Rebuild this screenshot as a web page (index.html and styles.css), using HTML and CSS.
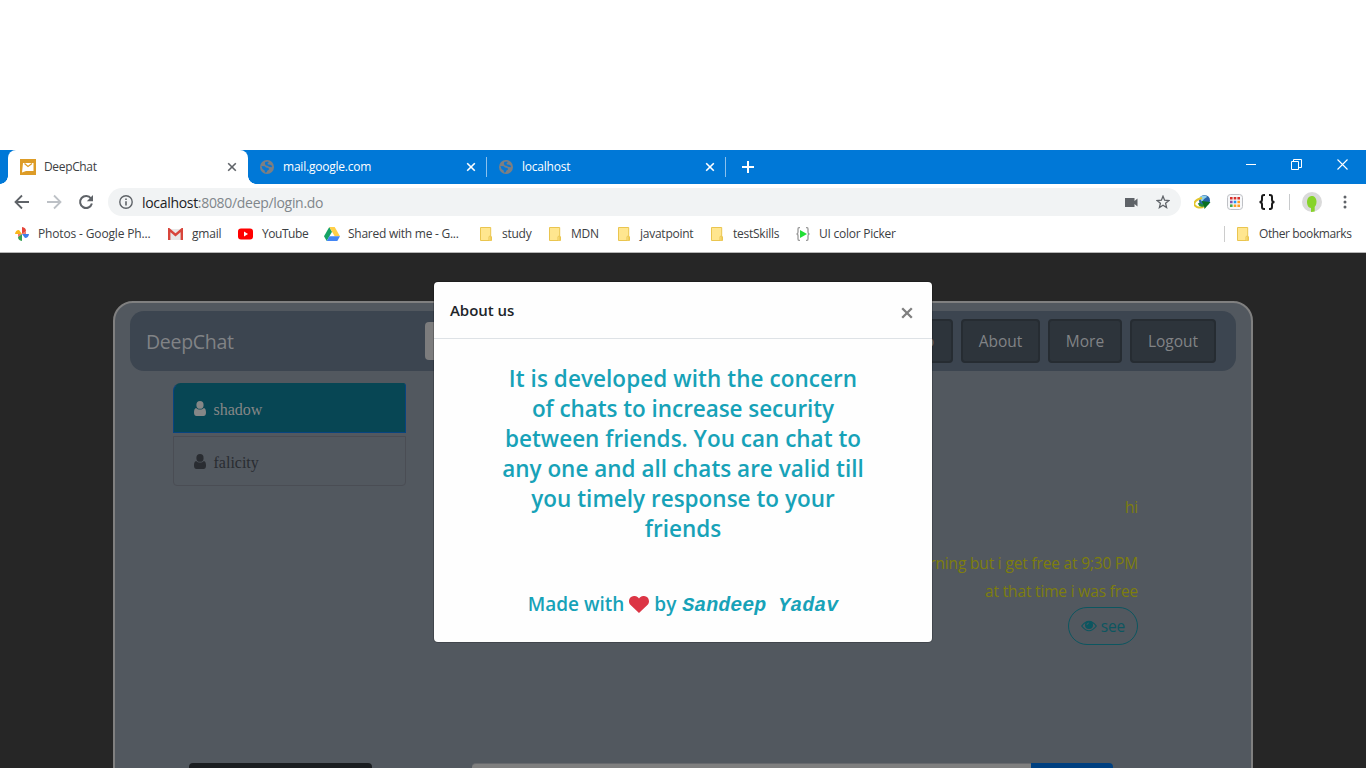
FILE: index.html
```html
<!DOCTYPE html>
<html lang="en">
<head>
<meta charset="utf-8">
<title>DeepChat</title>
<link rel="stylesheet" href="styles.css">
</head>
<body>
<svg width="0" height="0" class="defs">
  <symbol id="globe" viewBox="0 0 14 14"><circle cx="7" cy="7" r="7" fill="#7d7f82"/><path d="M1.500 6l3.200.2 1.200 1.300 2.600.5.5 1.500-1.700 1.200-.6 1.500-1.700.2-.3-2L2.500 9zM5.200 2l2.800-.5.8 1.100-1.300.7.4 1.300 2.300.2 2 1.200-.6 1.200-2.600-.4-1.500-1-1.600-.4-1-1.400z" fill="#0878d5"/></symbol>
  <symbol id="close" viewBox="0 0 10 10"><path d="M1.200 1.200l7.600 7.600M8.800 1.200L1.200 8.800" stroke="currentColor" stroke-width="1.600"/></symbol>
  <symbol id="folder" viewBox="0 0 12 14"><path d="M.5.5h10.200v9.300h.8v3.700H.5z" fill="#ffe68f" stroke="#eac54f"/><path d="M9 13.2V10q0-.8.8-.8h1v4" fill="#ffe68f" stroke="#eac54f"/></symbol>
  <symbol id="user" viewBox="0 0 12 15"><ellipse cx="6" cy="3.900" rx="3.600" ry="3.900" fill="currentColor"/><path d="M2.200 7C.5 7.300 0 9.300 0 11.700 0 13.700 1 15 2.500 15h7c1.500 0 2.500-1.300 2.500-3.300 0-2.400-.5-4.400-2.200-4.700C8.800 8 7.500 8.600 6 8.600S3.200 8 2.200 7z" fill="currentColor"/></symbol>
</svg>
<div class="screen">
  <div class="tabs">
    <div class="tab active">
      <svg width="16" height="16" viewBox="0 0 16 16"><path d="M0 0h16v16H0z" fill="#dd9c27"/><path d="M3 4h10.500v8H6l-4 1.500z" fill="#fff"/><path d="M4.500 4.500L8 7.500l4-3" fill="none" stroke="#dd9c27" stroke-width="1.300"/></svg>
      <span class="t-deep">DeepChat</span><svg class="x" width="10" height="10"><use href="#close"/></svg>
    </div>
    <div class="tab"><svg width="14" height="14"><use href="#globe"/></svg><span class="t-mail">mail.google.com</span><svg class="x" width="10" height="10"><use href="#close"/></svg></div>
    <div class="tab"><svg width="14" height="14"><use href="#globe"/></svg><span class="t-local">localhost</span><svg class="x" width="10" height="10"><use href="#close"/></svg></div>
    <svg class="plus" width="12" height="12" viewBox="0 0 12 12"><path d="M6 0v12M0 6h12" stroke="#fff" stroke-width="2"/></svg>
    <div class="win">
      <svg width="10" height="11"><path d="M0 5.500h10" stroke="#fff"/></svg>
      <svg width="11" height="11" fill="none" stroke="#fff"><path d="M.5 2.500h7v8h-7zM2.500 2.500v-2h8v8h-3"/></svg>
      <svg width="11" height="11" stroke="#fff" stroke-width="1.100"><path d="M.5.5l10 10M10.500.5l-10 10"/></svg>
    </div>
  </div>
  <div class="toolbar">
    <svg class="nav" width="16" height="16" viewBox="0 0 16 16" fill="none" stroke="#5f6368" stroke-width="1.800"><path d="M15 8H2M8 1.500L1.500 8 8 14.500"/></svg>
    <svg class="nav" width="16" height="16" viewBox="0 0 16 16" fill="none" stroke="#bdc1c6" stroke-width="1.800"><path d="M1 8h13M8 1.500L14.500 8 8 14.500"/></svg>
    <svg class="nav" width="16" height="16" viewBox="0 0 16 16"><path d="M13 4.500A6 6 0 1 0 13.900 9.500" fill="none" stroke="#5f6368" stroke-width="2"/><path d="M15 1v6.200H8.800z" fill="#5f6368"/></svg>
    <div class="address">
      <svg width="14" height="14" viewBox="0 0 14 14"><circle cx="7" cy="7" r="6.200" fill="none" stroke="#5f6368" stroke-width="1.400"/><path d="M6.200 6.200h1.600V10.500H6.200zM6.200 3.400h1.600V5H6.200z" fill="#5f6368"/></svg>
      <span class="url">localhost<i>:8080/deep/login.do</i></span>
      <svg class="cam" width="13" height="9" viewBox="0 0 13 9"><path d="M0 0h9.500v3L12.500.5v8L9.500 6v3H0z" fill="#5f6368"/></svg>
      <svg width="14" height="14" viewBox="0 0 14 14"><path d="M7 1.200l1.600 4 4.300.3-3.300 2.800 1 4.200L7 10.200l-3.600 2.300 1-4.200L1.100 5.500l4.300-.3z" fill="none" stroke="#5f6368" stroke-width="1.300"/></svg>
    </div>
    <div class="ext">
      <svg width="17" height="15" viewBox="0 0 17 15"><circle cx="10.500" cy="5.500" r="5.500" fill="#2864aa"/><path d="M5.500 3C8 0 12 0 13 2l-3 2-2 3z" fill="#8fd0e8"/><path d="M8 3C0 5-2 10 3 12c3 1 6 0 7-1" fill="none" stroke="#e3c62b" stroke-width="2"/><path d="M5 8c1 3 4 3 6 2" fill="none" stroke="#258a36" stroke-width="2.500"/><path d="M7.500 6l9 1-6 7-.5-3z" fill="#0a6f22"/></svg>
      <svg width="16" height="16" viewBox="0 0 16 16"><rect x=".5" y=".5" width="15" height="15" rx="3" fill="#f7f8fa" stroke="#bfc1c5"/><path d="M3 3h2.600v2.600H3zM6.700 3h2.600v2.600H6.700zM10.400 3H13v2.600h-2.600z" fill="#d8302b"/><path d="M3 6.700h2.600v2.600H3z" fill="#8650a6"/><path d="M6.700 6.700h2.600v2.600H6.700z" fill="#2196f3"/><path d="M10.400 6.700H13v2.600h-2.600zM6.700 10.400h2.600V13H6.700zM10.400 10.400H13V13h-2.600z" fill="#ff9c22"/><path d="M3 10.400h2.600V13H3z" fill="#46a849"/></svg>
      <svg width="16" height="16" viewBox="0 0 16 16" fill="none" stroke="#1b1b1b" stroke-width="2"><path d="M6 1H5Q3 1 3 3v2.500Q3 8 .5 8 3 8 3 10.500V13q0 2 2 2h1M10 1h1q2 0 2 2v2.500Q13 8 15.500 8 13 8 13 10.500V13q0 2-2 2h-1"/></svg>
      <b class="rule"></b>
      <svg width="20" height="20" viewBox="0 0 20 20"><circle cx="10" cy="10" r="10" fill="#dadada"/><path d="M5 10c0-8 9.500-8 9.500-.5 0 4-1.500 4.500-1.800 5.500v4.500L9 20v-4c-2.500 0-4-3-4-6z" fill="#87d32a"/></svg>
      <svg class="dots" width="4" height="14" viewBox="0 0 4 14" fill="#5f6368"><circle cx="2" cy="2" r="1.500"/><circle cx="2" cy="7" r="1.500"/><circle cx="2" cy="12" r="1.500"/></svg>
    </div>
  </div>
  <div class="bookmarks">
    <div class="bm b1"><svg width="14" height="14" viewBox="0 0 14 14"><path d="M7 7V0q4 .5 4 4z" fill="#e5453a"/><path d="M7 7h7q-.5 4-4 4z" fill="#3c7eea"/><path d="M7 7v7q-4-.5-4-4z" fill="#35a153"/><path d="M7 7H0q.5-4 4-4z" fill="#fbb719"/><path d="M7 7l4-3v3zM7 7L3 10V7z" fill="#e5453a" opacity=".7"/></svg><span>Photos - Google Ph...</span></div>
    <div class="bm b2"><svg width="15" height="12" viewBox="0 0 15 12"><path d="M1 1h13v11H1z" fill="#e8e8e8"/><path d="M1.200 12V1.500L7.500 7l6.300-5.500V12" fill="none" stroke="#d8453b" stroke-width="2.400"/></svg><span>gmail</span></div>
    <div class="bm b3"><svg width="15" height="12" viewBox="0 0 15 12"><rect y=".5" width="15" height="11" rx="3" fill="red"/><path d="M6 3.500L10 6 6 8.500z" fill="#fff"/></svg><span>YouTube</span></div>
    <div class="bm b4"><svg width="16" height="14" viewBox="0 0 16 14"><path d="M5.300 0L0 9.300 2.700 14 8 4.700z" fill="#16a365"/><path d="M5.300 0h5.400L16 9.300h-5.300z" fill="#ffcf48"/><path d="M5.400 9.300H16L13.300 14H2.700z" fill="#4285f4"/></svg><span>Shared with me - G...</span></div>
    <div class="bm b5"><svg width="12" height="14"><use href="#folder"/></svg><span>study</span></div>
    <div class="bm b6"><svg width="12" height="14"><use href="#folder"/></svg><span>MDN</span></div>
    <div class="bm b7"><svg width="12" height="14"><use href="#folder"/></svg><span>javatpoint</span></div>
    <div class="bm b8"><svg width="12" height="14"><use href="#folder"/></svg><span>testSkills</span></div>
    <div class="bm b9"><svg width="14" height="14" viewBox="0 0 14 14"><path d="M4 .7H3Q2 .7 2 2v3q0 2-1.500 2Q2 7 2 9v3q0 1.300 1 1.300h1M10 .7h1q1 0 1 1.300v3q0 2 1.500 2Q12 7 12 9v3q0 1.300-1 1.300h-1" fill="none" stroke="#999" stroke-width="1.300"/><path d="M4 3l7 4-7 4z" fill="#22df35"/></svg><span>UI color Picker</span></div>
    <div class="bm other"><svg width="12" height="14"><use href="#folder"/></svg><span>Other bookmarks</span></div>
  </div>
  <div class="page">
    <div class="panel">
      <div class="navbar">
        <span class="brand">DeepChat</span><span class="search"></span>
        <div class="btns"><span class="w1">Info</span><span class="w2">About</span><span class="w3">More</span><span class="w4">Logout</span></div>
      </div>
      <div class="main">
        <div class="friends">
          <div class="friend on"><svg width="12" height="15"><use href="#user"/></svg><span>shadow</span></div>
          <div class="friend"><svg width="12" height="15"><use href="#user"/></svg><span>falicity</span></div>
        </div>
        <div class="chat">
          <p class="m1">hi</p>
          <p class="m2">in morning but i get free at 9;30 PM</p>
          <p class="m3">at that time i was free</p>
          <div class="see"><svg width="16" height="12" viewBox="0 0 16 12"><path d="M.7 6Q8-3.500 15.300 6 8 15.500.7 6z" fill="none" stroke="currentColor" stroke-width="1.200"/><circle cx="8" cy="5" r="4" fill="currentColor"/><path d="M6 5q0-2 2-2" fill="none" stroke="#52585f" stroke-width=".8"/></svg><span>see</span></div>
        </div>
      </div>
      <div class="compose"><b class="c1"></b><b class="c2"></b><b class="c3"></b></div>
    </div>
    <div class="modal">
      <div class="head"><span class="about">About us</span><svg width="12" height="12" viewBox="0 0 12 12"><path d="M1.200 1.200l9.600 9.600M10.800 1.200l-9.600 9.600" stroke="#7f7f7f" stroke-width="2.300"/></svg></div>
      <div class="body">
        <p><span class="l1">It is developed with the concern</span><br><span class="l2">of chats to increase security</span><br><span class="l3">between friends. You can chat to</span><br><span class="l4">any one and all chats are valid till</span><br><span class="l5">you timely response to your</span><br><span class="l6">friends</span></p>
        <div class="made"><span class="mw">Made with</span><svg width="20" height="17" viewBox="0 0 20 17"><path d="M10 17L1.600 9C-2 5 1-.2 5.500 0 8 0 9.400 1.500 10 2.500 10.600 1.500 12 0 14.500 0 19-.2 22 5 18.400 9z" fill="#dc3545"/></svg><span class="by">by</span><em>Sandeep Yadav</em></div>
      </div>
    </div>
  </div>
</div>
</body>
</html>
```
FILE: styles.css
```css
* { box-sizing: border-box; }
body { margin: 0; background: #fff; font-family: "Open Sans", "Noto Sans", sans-serif; overflow: hidden; }
svg { display: block; flex: none; }
span { white-space: nowrap; }
p { margin: 0; }
.defs { display: none; }
.screen { width: 1366px; height: 768px; padding-top: 150px; display: flex; flex-direction: column; overflow: hidden; }
.tabs { height: 34px; flex: none; background: radial-gradient(circle at 0 0, #0078d7 7.5px, #fff 8px) 0 26px / 8px 8px no-repeat, radial-gradient(circle at 8px 0, #0078d7 7.5px, #fff 8px) 248px 26px / 8px 8px no-repeat, #0078d7; display: flex; align-items: center; padding-left: 8px; color: #fff; font-size: 12px; }
.tab { width: 239px; height: 20px; display: flex; align-items: center; padding: 0 10px 0 12px; border-right: 1px solid #8bc1ed; }
.tab span { margin-left: 9px; letter-spacing: -.22px; padding-bottom: 1px; }
.tab .x { margin-left: auto; }
.tab.active { width: 240px; height: 34px; background: #fff; color: #3c4043; border: 0; border-radius: 8px 8px 0 0; padding-right: 11px; }
.tab.active span { margin-left: 8px; letter-spacing: -.35px; }
.tab.active .x { color: #5f6368; }
.plus { margin-left: 16px; }
.win { margin-left: auto; display: flex; gap: 35px; padding: 0 18px 6px 0; }
.toolbar { height: 36px; flex: none; display: flex; align-items: center; padding-left: 14px; }
.nav { margin-right: 16px; }
.address { width: 1073px; height: 28px; margin-left: -2px; border-radius: 14px; background: #f1f3f4; display: flex; align-items: center; padding: 0 11px; }
.url { font-size: 14px; color: #202124; margin-left: 9px; letter-spacing: -.31px; }
.url i { color: #80868b; font-style: normal; }
.cam { margin: 0 18px 0 auto; }
.ext { flex: 1; display: flex; align-items: center; padding-left: 13px; gap: 16px; }
.rule { width: 1px; height: 16px; background: #c8cacc; margin: 0 -4px 0 -2px; }
.dots { margin-left: 5px; }
.bookmarks { height: 33px; flex: none; border-bottom: 1px solid #b6b6b6; display: flex; align-items: center; padding: 0 0 5px 15px; font-size: 12px; color: #3c4043; }
.bm { display: flex; align-items: center; letter-spacing: -.25px; }
.bm span { margin-left: 10px; }
.b1 { width: 153px; letter-spacing: -.15px; } .b1 span { margin-left: 9px; }
.b2 { width: 70px; letter-spacing: -.2px; } .b2 span { margin-left: 9px; }
.b3 { width: 86px; letter-spacing: -.45px; } .b3 span { margin-left: 9px; }
.b4 { width: 156px; } .b4 span { margin-left: 8px; }
.b5, .b6 { width: 69px; }
.b7 { width: 93px; } .b8 { width: 85px; } .b9 span { margin-left: 9px; }
.bm.other { margin-left: auto; width: 142px; height: 16px; padding-left: 12px; border-left: 1px solid #ccc; letter-spacing: -.4px; }
.page { height: 515px; flex: none; position: relative; background: #262626; padding-top: 48px; }
.panel { margin-left: 113px; width: 1140px; height: 500px; border: 2px solid #808080; border-radius: 20px 20px 0 0; background: #52585f; padding: 8px 15px 0; }
.navbar { width: 1106px; height: 60px; border-radius: 14px; background: #3c4550; display: flex; align-items: center; color: #818386; padding: 0 20px 0 16px; }
.brand { width: 279px; font-size: 19.500px; letter-spacing: -.3px; padding-top: 1px; }
.search { width: 180px; height: 38px; border-radius: 4px; background: #7c7c7d; }
.btns { display: flex; gap: 8px; margin-left: auto; font-size: 15.500px; }
.btns span { height: 44px; line-height: 41px; border: 2px solid #262c32; border-radius: 4px; background: #2d343b; text-align: center; }
.w1 { width: 66px; } .w2 { width: 79px; } .w3 { width: 74px; } .w4 { width: 86px; }
.main { display: flex; justify-content: space-between; height: 392px; padding: 12px 98px 0 43px; }
.friends { width: 233px; display: flex; flex-direction: column; gap: 3px; font: 16px "Liberation Serif", serif; }
.friend { height: 50px; border: 1px solid #4a4d54; border-radius: 0 0 4px 4px; display: flex; align-items: center; padding-left: 20px; color: #292c31; }
.friend span { margin-left: 7.500px; padding-top: 3px; }
.friend.on { border-color: #07447f; border-top-color: #074654; background: #074654; border-radius: 8px 3px 0 0; color: #858787; }
.chat { display: flex; flex-direction: column; align-items: flex-end; color: #7e7e0d; font-size: 15.500px; letter-spacing: -.17px; line-height: 28px; padding-top: 110px; white-space: nowrap; }
.m2 { margin-top: 28px; }
.see { margin-top: 2px; width: 70px; height: 38px; border: 1px solid #0c5660; border-radius: 19px; display: flex; align-items: center; justify-content: center; gap: 4px; color: #0c5660; }
.compose { display: flex; padding-left: 59px; height: 20px; }
.c1 { width: 183px; background: #1a1d20; border-radius: 4px 4px 0 0; margin-right: 100px; }
.c2 { width: 559px; background: #7f7f7f; border-top: 1px solid #67696d; border-radius: 4px 0 0 0; }
.c3 { width: 82px; background: #004080; border-radius: 0 4px 0 0; }
.modal { position: absolute; left: 434px; top: 29px; width: 498px; height: 360px; background: #fefefe; border-radius: 4px; box-shadow: 0 0 0 1px rgba(0,0,0,.2); }
.head { height: 57px; border-bottom: 1px solid #dee2e6; display: flex; align-items: center; justify-content: space-between; padding: 0 19px 0 16px; color: #212529; }
.about { font-size: 15px; font-weight: 600; letter-spacing: -.05px; }
.head svg { margin-top: 5px; }
.body { color: #17a2b8; font-weight: 600; text-align: center; padding-top: 25px; font-size: 22.500px; line-height: 30px; }
.l1 { letter-spacing: .06px; }
.l2 { letter-spacing: -.06px; }
.made { display: flex; justify-content: center; align-items: center; font-size: 19px; margin-top: 45px; }
.made svg { margin: 0 5px; }
.made em { font: italic bold 20px "Liberation Mono", monospace; margin: 2px 0 0 6px; }
```
